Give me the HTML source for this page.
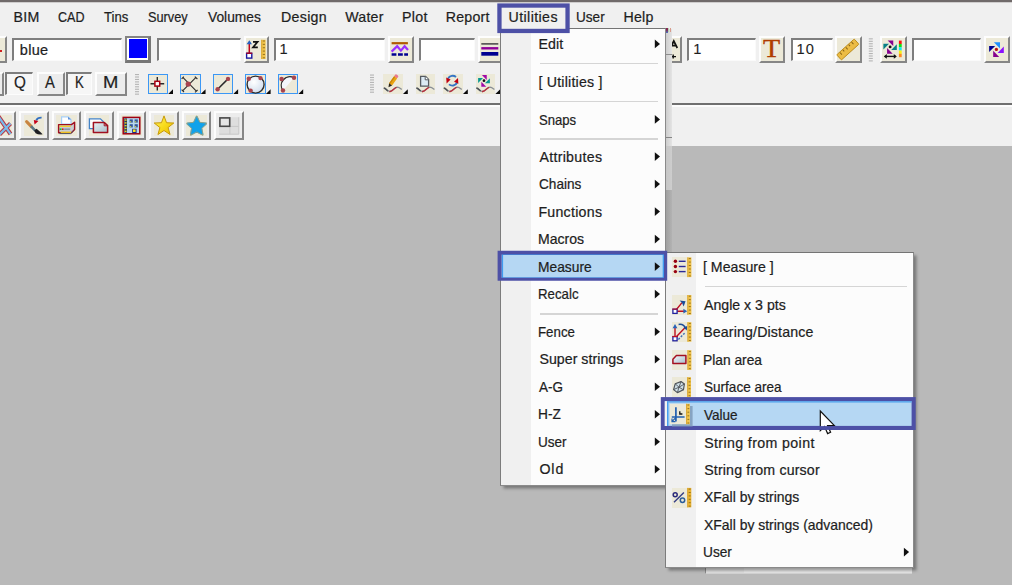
<!DOCTYPE html>
<html><head><meta charset="utf-8"><title>Utilities - Measure - Value</title>
<style>
html,body{margin:0;padding:0}
body{width:1012px;height:585px;overflow:hidden;background:#b9b9b9;position:relative;font-family:"Liberation Sans",sans-serif}
.a{position:absolute;box-sizing:border-box}
.t{position:absolute;transform-origin:0 0;white-space:pre;line-height:normal;font-family:"Liberation Sans",sans-serif;-webkit-text-stroke:0.22px currentColor}
.rb{border-top:2px solid #fdfdfd;border-left:2px solid #fdfdfd;border-right:2.2px solid #868686;border-bottom:2.2px solid #868686}
.sk{background:#fff;border-top:2px solid #7e7e7e;border-left:2px solid #7e7e7e;border-right:1.5px solid #fafafa;border-bottom:1.5px solid #fafafa}
.sb{background:#f6f6f6;border-top:2px solid #7e7e7e;border-left:2px solid #7e7e7e;border-right:1.5px solid #fcfcfc;border-bottom:1.5px solid #fcfcfc}
.menu{background:#fcfcfc;border:1px solid #8a8a8a;border-top-color:#747474;border-left-color:#7c7c7c;box-shadow:2.5px 2.5px 3px rgba(0,0,0,.36)}
.gut{background:#f0f0f0}
svg{overflow:hidden}
</style></head>
<body>
<div class="a" style="left:0px;top:0px;width:1012px;height:146px;background:#f0f0f0"></div>
<div class="a" style="left:0px;top:0px;width:1012px;height:2px;background:#706a6a"></div>
<div class="a" style="left:0px;top:2px;width:1012px;height:1px;background:#cfcdcd"></div>
<div class="a" style="left:0px;top:102.6px;width:1012px;height:2.4px;background:#6f6f6f"></div>
<div class="a" style="left:0px;top:105px;width:1012px;height:2px;background:#fcfcfc"></div>
<div class="a rb" style="left:-20px;top:36px;width:26.5px;height:26.5px;background:#ece9d8"></div>
<div class="a" style="left:0px;top:50px;width:2px;height:2px;background:#d02020"></div>
<div class="a sk" style="left:12px;top:37.5px;width:110px;height:23px;"></div>
<div class="a" style="left:125px;top:36px;width:26.3px;height:27px;background:#fff;border:2px solid #848484;border-right:3px solid #767676;border-bottom:3px solid #767676"></div>
<div class="a" style="left:128.8px;top:39.3px;width:18px;height:18.8px;background:#0000ff"></div>
<div class="a sk" style="left:156.5px;top:37.5px;width:84px;height:23px;"></div>
<div class="a rb" style="left:243.5px;top:36px;width:25.5px;height:26.5px;background:#ece9d8"></div>
<div class="a sk" style="left:274px;top:37.5px;width:111px;height:23px;"></div>
<div class="a rb" style="left:388.3px;top:36px;width:25.5px;height:26.5px;background:#ece9d8"></div>
<div class="a sk" style="left:419.3px;top:37.5px;width:56px;height:23px;"></div>
<div class="a rb" style="left:478.3px;top:36px;width:25.5px;height:26.5px;background:#ece9d8"></div>
<div class="a rb" style="left:656px;top:36px;width:25.5px;height:26.5px;background:#ece9d8"></div>
<div class="a sk" style="left:686.8px;top:37.5px;width:69.5px;height:23px;"></div>
<div class="a rb" style="left:759px;top:36px;width:26px;height:26.5px;background:#ece9d8"></div>
<div class="a sk" style="left:790.8px;top:37.5px;width:42px;height:23px;"></div>
<div class="a rb" style="left:834.6px;top:36px;width:27px;height:26.5px;background:#ece9d8"></div>
<div class="a rb" style="left:880px;top:36px;width:26.5px;height:26.5px;background:#ece9d8"></div>
<div class="a sk" style="left:912px;top:37.5px;width:69px;height:23px;"></div>
<div class="a rb" style="left:984.2px;top:36px;width:26px;height:26.5px;background:#ece9d8"></div>
<div class="a rb" style="left:-20px;top:72px;width:23.5px;height:24px;background:#ececec"></div>
<div class="a sb" style="left:5px;top:72px;width:28px;height:22.5px;"></div>
<div class="a rb" style="left:37px;top:72px;width:27.5px;height:24px;background:#ececec"></div>
<div class="a sb" style="left:66px;top:72px;width:26px;height:22.5px;"></div>
<div class="a rb" style="left:95px;top:72px;width:31.7px;height:24px;background:#ececec"></div>
<div class="a" style="left:147.8px;top:74.2px;width:20.2px;height:20.2px;background:#ece9d8;border:1.3px solid #3b97f5"></div>
<div class="a" style="left:180.4px;top:74.2px;width:20.2px;height:20.2px;background:#ece9d8;border:1.3px solid #3b97f5"></div>
<div class="a" style="left:212.9px;top:74.2px;width:20.2px;height:20.2px;background:#ece9d8;border:1.3px solid #3b97f5"></div>
<div class="a" style="left:245.4px;top:74.2px;width:20.2px;height:20.2px;background:#ece9d8;border:1.3px solid #3b97f5"></div>
<div class="a" style="left:278.0px;top:74.2px;width:20.2px;height:20.2px;background:#ece9d8;border:1.3px solid #3b97f5"></div>
<div class="a" style="left:383px;top:74px;width:19.6px;height:20px;background:#ece9d8"></div>
<div class="a" style="left:415.6px;top:74px;width:19.6px;height:20px;background:#ece9d8"></div>
<div class="a" style="left:443px;top:74px;width:19.6px;height:20px;background:#ece9d8"></div>
<div class="a" style="left:475.6px;top:74px;width:19.6px;height:20px;background:#ece9d8"></div>
<div class="a rb" style="left:-13.2px;top:110.7px;width:29.6px;height:29.8px;background:#ececec"><div class="a" style="left:2.5px;top:2.6px;width:20.6px;height:20.6px;background:#ece9d8"></div></div>
<div class="a rb" style="left:19.3px;top:110.7px;width:29.6px;height:29.8px;background:#ececec"><div class="a" style="left:2.5px;top:2.6px;width:20.6px;height:20.6px;background:#ece9d8"></div></div>
<div class="a rb" style="left:51.8px;top:110.7px;width:29.6px;height:29.8px;background:#ececec"><div class="a" style="left:2.5px;top:2.6px;width:20.6px;height:20.6px;background:#ece9d8"></div></div>
<div class="a rb" style="left:84.3px;top:110.7px;width:29.6px;height:29.8px;background:#ececec"><div class="a" style="left:2.5px;top:2.6px;width:20.6px;height:20.6px;background:#ece9d8"></div></div>
<div class="a rb" style="left:116.8px;top:110.7px;width:29.6px;height:29.8px;background:#ececec"><div class="a" style="left:2.5px;top:2.6px;width:20.6px;height:20.6px;background:#ece9d8"></div></div>
<div class="a rb" style="left:149.3px;top:110.7px;width:29.6px;height:29.8px;background:#ececec"><div class="a" style="left:2.5px;top:2.6px;width:20.6px;height:20.6px;background:#ece9d8"></div></div>
<div class="a rb" style="left:181.8px;top:110.7px;width:29.6px;height:29.8px;background:#ececec"><div class="a" style="left:2.5px;top:2.6px;width:20.6px;height:20.6px;background:#ece9d8"></div></div>
<div class="a rb" style="left:214.3px;top:110.7px;width:29.6px;height:29.8px;background:#ececec"></div>
<svg class="a" style="left:0;top:0" width="1012" height="585" viewBox="0 0 1012 585"><path d="M249.3 42.5 V54" stroke="#c00018" stroke-width="1.5"/><path d="M246.6 44.3 L249.3 40.3 L252 44.3 Z" fill="#2860c0"/><rect x="246.6" y="53.3" width="5.2" height="4.8" fill="#fff" stroke="#1818a0" stroke-width="1.4"/><path d="M246.3 53.2 H252.2" stroke="#b00018" stroke-width="1.3"/><path d="M253 41.8 H257.6 L253 47.3 H257.8" stroke="#111" stroke-width="1.7" fill="none"/><rect x="261.3" y="39.8" width="4.3" height="19.2" fill="#efc24a"/><rect x="261.3" y="39.8" width="0.8" height="19.2" fill="#d9a22a"/><rect x="262.81" y="40.50" width="2.15" height="1" fill="#7a5a10" opacity=".75"/><rect x="262.81" y="43.86" width="2.15" height="1" fill="#7a5a10" opacity=".75"/><rect x="262.81" y="47.22" width="2.15" height="1" fill="#7a5a10" opacity=".75"/><rect x="262.81" y="50.58" width="2.15" height="1" fill="#7a5a10" opacity=".75"/><rect x="262.81" y="53.94" width="2.15" height="1" fill="#7a5a10" opacity=".75"/><rect x="262.81" y="57.30" width="2.15" height="1" fill="#7a5a10" opacity=".75"/><rect x="391.6" y="42.1" width="16.3" height="2.2" fill="#b05a00"/><path d="M391.6 51.6 L397.2 46.2 L400.9 50.6 L404.6 46.2 L408 50" stroke="#9a30ff" stroke-width="2.2" fill="none"/><path d="M391.6 54.5 H396.4 M398 54.5 H402.8 M404.2 54.5 H408" stroke="#000090" stroke-width="2.6"/><rect x="481.3" y="43.2" width="17" height="1.4" fill="#3a3a3a"/><rect x="481.3" y="47.1" width="17" height="2.4" fill="#900098"/><rect x="481.3" y="52" width="17" height="3.7" fill="#000090"/><path d="M670.3 48 L673.8 41 L677.3 48 M671.6 45.6 H676" stroke="#111" stroke-width="1.7" fill="none"/><path d="M670.5 56.6 H676 M673.2 54.6 V58.6" stroke="#111" stroke-width="1.4"/><text transform="translate(763.1 57.3) scale(1.1 1)" x="0" y="0" font-family="Liberation Serif" font-size="25.6" fill="#b03c00" stroke="#b03c00" stroke-width=".35">T</text><g transform="rotate(-42 847.8 49.5)"><rect x="836" y="46" width="23.6" height="7" rx="0.8" fill="#ecbc44" stroke="#b98a1c" stroke-width="0.9"/><path d="M840 46.5 V49.3 M843.9 46.5 V48.5 M847.8 46.5 V49.3 M851.7 46.5 V48.5 M855.6 46.5 V49.3" stroke="#8a6414" stroke-width="1"/></g><rect x="868.8" y="38.30" width="4" height="1.1" fill="#b4b4b4"/><rect x="868.8" y="40.75" width="4" height="1.1" fill="#b4b4b4"/><rect x="868.8" y="43.20" width="4" height="1.1" fill="#b4b4b4"/><rect x="868.8" y="45.65" width="4" height="1.1" fill="#b4b4b4"/><rect x="868.8" y="48.10" width="4" height="1.1" fill="#b4b4b4"/><rect x="868.8" y="50.55" width="4" height="1.1" fill="#b4b4b4"/><rect x="868.8" y="53.00" width="4" height="1.1" fill="#b4b4b4"/><rect x="868.8" y="55.45" width="4" height="1.1" fill="#b4b4b4"/><rect x="868.8" y="57.90" width="4" height="1.1" fill="#b4b4b4"/><rect x="868.8" y="60.35" width="4" height="1.1" fill="#b4b4b4"/><polygon points="887.71,40.38 893.22,40.38 893.22,45.98" fill="#86008e"/><polygon points="896.80,44.24 896.80,49.93 891.20,49.93" fill="#088086"/><polygon points="887.07,48.00 887.07,53.69 892.67,53.69" fill="#86008e"/><polygon points="883.40,43.87 889.00,43.87 883.40,49.38" fill="#088086"/><circle cx="890.1" cy="46.9" r="1.47" fill="#111"/><path d="M884.8 56.4 H895.8" stroke="#111" stroke-width="1.4"/><path d="M886.8 54 L883.8 56.4 L886.8 58.8 Z M893.8 54 L896.8 56.4 L893.8 58.8 Z" fill="#111"/><rect x="898.9" y="40.6" width="2.8" height="3.4" fill="#ff1010"/><rect x="898.9" y="43.9" width="2.8" height="3.4" fill="#10e010"/><rect x="898.9" y="47.2" width="2.8" height="3.4" fill="#10e8f0"/><rect x="898.9" y="50.5" width="2.8" height="3.4" fill="#f8f010"/><rect x="898.9" y="53.8" width="2.8" height="3.4" fill="#ff8820"/><path d="M993.9 42.3 H1000 V48.4 Z" fill="#1e90ff"/><path d="M1003.8 46.6 V52.9 H997.6 Z" fill="#8a10ff"/><path d="M993.2 50.7 V57 H999.2 Z" fill="#86008e"/><path d="M989.1 46.1 H995.2 L989.1 52.1 Z" fill="#000090"/><circle cx="996.4" cy="49.4" r="1.6" fill="#b81010"/><rect x="135" y="74.00" width="4" height="1.1" fill="#b4b4b4"/><rect x="135" y="76.45" width="4" height="1.1" fill="#b4b4b4"/><rect x="135" y="78.90" width="4" height="1.1" fill="#b4b4b4"/><rect x="135" y="81.35" width="4" height="1.1" fill="#b4b4b4"/><rect x="135" y="83.80" width="4" height="1.1" fill="#b4b4b4"/><rect x="135" y="86.25" width="4" height="1.1" fill="#b4b4b4"/><rect x="135" y="88.70" width="4" height="1.1" fill="#b4b4b4"/><rect x="135" y="91.15" width="4" height="1.1" fill="#b4b4b4"/><rect x="135" y="93.60" width="4" height="1.1" fill="#b4b4b4"/><path d="M150.5 83.7 H164.2 M157.3 77 V90.6" stroke="#2a2a2a" stroke-width="1.4"/><rect x="154.9" y="81.3" width="4.8" height="4.8" fill="#fff" stroke="#a80010" stroke-width="1.5"/><path d="M182.6 77.2 L196.6 91.4 M196.2 77.2 L182.6 90.8 M194.8 76.6 L197.4 79 M195 92.4 L197.6 90 M181.6 78.8 L183.8 76.6 M181.6 89.6 L184 92" stroke="#2e2e2e" stroke-width="1.1" fill="none"/><circle cx="188.2" cy="84.1" r="2.6" fill="#a8444e"/><path d="M217.6 89.3 L228 78.9" stroke="#2a2a2a" stroke-width="1.5"/><circle cx="217.6" cy="89.3" r="2.2" fill="#a8444e"/><circle cx="228" cy="78.9" r="2.2" fill="#a8444e"/><defs><radialGradient id="gs" cx="40%" cy="35%" r="70%"><stop offset="0" stop-color="#ffffff"/><stop offset="1" stop-color="#cfdcec"/></radialGradient></defs><circle cx="255.6" cy="84.6" r="8.5" fill="url(#gs)" stroke="#2e2e2e" stroke-width="1.4"/><circle cx="248.8" cy="78.7" r="2.2" fill="#a8444e"/><circle cx="260.5" cy="78.1" r="2.2" fill="#a8444e"/><circle cx="250.6" cy="90.6" r="2.2" fill="#a8444e"/><path d="M283 90.5 A8.6 8.6 0 0 1 294 77.8 Z" fill="#f4f7fb" stroke="none"/><path d="M283 90.5 A8.6 8.6 0 0 1 294 77.8" fill="none" stroke="#2e2e2e" stroke-width="1.3"/><circle cx="281.6" cy="79" r="2.2" fill="#a8444e"/><circle cx="294" cy="77.8" r="2.2" fill="#a8444e"/><circle cx="283" cy="90.5" r="2.2" fill="#a8444e"/><path d="M168.2 94.1 L173.0 94.1 L173.0 89.3 Z" fill="#0a0a0a"/><path d="M200.75 94.1 L205.55 94.1 L205.55 89.3 Z" fill="#0a0a0a"/><path d="M233.29999999999998 94.1 L238.1 94.1 L238.1 89.3 Z" fill="#0a0a0a"/><path d="M265.84999999999997 94.1 L270.65 94.1 L270.65 89.3 Z" fill="#0a0a0a"/><path d="M298.4 94.1 L303.2 94.1 L303.2 89.3 Z" fill="#0a0a0a"/><rect x="370" y="74.50" width="4" height="1.1" fill="#b4b4b4"/><rect x="370" y="76.95" width="4" height="1.1" fill="#b4b4b4"/><rect x="370" y="79.40" width="4" height="1.1" fill="#b4b4b4"/><rect x="370" y="81.85" width="4" height="1.1" fill="#b4b4b4"/><rect x="370" y="84.30" width="4" height="1.1" fill="#b4b4b4"/><rect x="370" y="86.75" width="4" height="1.1" fill="#b4b4b4"/><rect x="370" y="89.20" width="4" height="1.1" fill="#b4b4b4"/><rect x="370" y="91.65" width="4" height="1.1" fill="#b4b4b4"/><path d="M383.8 88.1 C386.4 88.6 387.4 91.7 390 91.5 C393 91.3 394.4 87.3 397.4 87.2 C399.4 87.2 400.6 88.6 401.8 89.5" fill="none" stroke="#8a9096" stroke-width="1.3"/><path d="M383.8 88.1 C386.4 88.6 387.4 91.7 390 91.5 C393 91.3 394.4 87.3 397.4 87.2 C399.4 87.2 400.6 88.6 401.8 89.5" fill="none" stroke="#bc2432" stroke-width="1.3" stroke-dasharray="0 6.6 8.4 30" opacity=".92"/><path d="M383.8 88.1 C386.4 88.6 387.4 91.7 390 91.5" fill="none" stroke="#50545a" stroke-width="1.5" stroke-dasharray="5.2 30"/><g transform="rotate(35.5 392.7 81.3)"><rect x="390.9" y="73.6" width="3.7" height="3" rx="1" fill="#ea7890"/><rect x="390.9" y="76.4" width="3.7" height="8.6" fill="#eaa410"/><rect x="390.9" y="76.4" width="1.3" height="8.6" fill="#c88408"/><path d="M390.9 85 H394.6 L392.75 88.6 Z" fill="#2a2418"/></g><path d="M416.40000000000003 88.1 C419.0 88.6 420.0 91.7 422.6 91.5 C425.6 91.3 427.0 87.3 430.0 87.2 C432.0 87.2 433.20000000000005 88.6 434.40000000000003 89.5" fill="none" stroke="#8a9096" stroke-width="1.3"/><path d="M416.40000000000003 88.1 C419.0 88.6 420.0 91.7 422.6 91.5 C425.6 91.3 427.0 87.3 430.0 87.2 C432.0 87.2 433.20000000000005 88.6 434.40000000000003 89.5" fill="none" stroke="#bc2432" stroke-width="1.3" stroke-dasharray="0 6.6 8.4 30" opacity=".92"/><path d="M416.40000000000003 88.1 C419.0 88.6 420.0 91.7 422.6 91.5" fill="none" stroke="#50545a" stroke-width="1.5" stroke-dasharray="5.2 30"/><path d="M420.6 76.4 H425.6 L428.6 79.4 V86.2 H420.6 Z" fill="#dceaf4" stroke="#555a60" stroke-width="1.3"/><path d="M425.2 76.4 V79.8 H428.6" fill="#fff" stroke="#555a60" stroke-width="1"/><path d="M443.8 88.1 C446.4 88.6 447.4 91.7 450 91.5 C453 91.3 454.4 87.3 457.4 87.2 C459.4 87.2 460.6 88.6 461.8 89.5" fill="none" stroke="#8a9096" stroke-width="1.3"/><path d="M443.8 88.1 C446.4 88.6 447.4 91.7 450 91.5 C453 91.3 454.4 87.3 457.4 87.2 C459.4 87.2 460.6 88.6 461.8 89.5" fill="none" stroke="#bc2432" stroke-width="1.3" stroke-dasharray="0 6.6 8.4 30" opacity=".92"/><path d="M443.8 88.1 C446.4 88.6 447.4 91.7 450 91.5" fill="none" stroke="#50545a" stroke-width="1.5" stroke-dasharray="5.2 30"/><path d="M448 78.6 A5.2 5.2 0 0 1 456 77" fill="none" stroke="#3474c4" stroke-width="1.9"/><path d="M457 82.8 A5.2 5.2 0 0 1 449 84.4" fill="none" stroke="#3474c4" stroke-width="1.9"/><path d="M446.2 77.6 L450.6 79.4 L446.6 83.4 Z" fill="#c00010"/><path d="M458.4 83.8 L454 81.8 L458 78 Z" fill="#c00010"/><path d="M476.40000000000003 88.1 C479.0 88.6 480.0 91.7 482.6 91.5 C485.6 91.3 487.0 87.3 490.0 87.2 C492.0 87.2 493.20000000000005 88.6 494.40000000000003 89.5" fill="none" stroke="#8a9096" stroke-width="1.3"/><path d="M476.40000000000003 88.1 C479.0 88.6 480.0 91.7 482.6 91.5 C485.6 91.3 487.0 87.3 490.0 87.2 C492.0 87.2 493.20000000000005 88.6 494.40000000000003 89.5" fill="none" stroke="#bc2432" stroke-width="1.3" stroke-dasharray="0 6.6 8.4 30" opacity=".92"/><path d="M476.40000000000003 88.1 C479.0 88.6 480.0 91.7 482.6 91.5" fill="none" stroke="#50545a" stroke-width="1.5" stroke-dasharray="5.2 30"/><polygon points="481.90,74.96 486.75,74.96 486.75,79.89" fill="#a008a8"/><polygon points="489.90,78.36 489.90,83.37 484.97,83.37" fill="#089890"/><polygon points="481.33,81.67 481.33,86.68 486.26,86.68" fill="#a008a8"/><polygon points="478.10,78.03 483.03,78.03 478.10,82.88" fill="#089890"/><circle cx="484" cy="80.7" r="1.36" fill="#111"/><path d="M403 94.1 L407.8 94.1 L407.8 89.3 Z" fill="#0a0a0a"/><path d="M463 94.1 L467.8 94.1 L467.8 89.3 Z" fill="#0a0a0a"/><path d="M495.4 94.1 L500.2 94.1 L500.2 89.3 Z" fill="#0a0a0a"/><path d="M-1.5 116.5 L10.5 134 M10.5 123.5 L-0.5 134.5" stroke="#b43848" stroke-width="4.2" fill="none"/><path d="M-1.5 116.5 L10.5 134 M10.5 123.5 L-0.5 134.5" stroke="#78bcec" stroke-width="2.2" fill="none"/><path d="M26.6 121.6 L31.4 126.6" stroke="#c88440" stroke-width="3" stroke-linecap="round"/><path d="M31 126.2 L35.4 130.8" stroke="#5a7684" stroke-width="2.6"/><path d="M34.2 130.6 L36.6 128.8 Q40 131.6 42.6 134.2 Q38.6 135 35.6 133.2 Z" fill="#1e1e22"/><path d="M41.6 117.6 Q37.6 117.4 36.2 120.4" fill="none" stroke="#3470c0" stroke-width="1.8"/><path d="M33.8 120 L38.4 121 L34.6 124.4 Z" fill="#c80018"/><path d="M61.6 124 V116.8 H68 L71 119.6 V124 Z" fill="#fff" stroke="#a8d0f8" stroke-width="1.2"/><path d="M68 116.8 L71 119.6 H68 Z" fill="#5c90d8"/><path d="M58.6 124.6 H71.4 L74.6 122.2 V129.6 L71.4 132.8 H58.6 Z" fill="#c8ccd0" stroke="#a01020" stroke-width="1.4" stroke-linejoin="round"/><rect x="59.4" y="125.6" width="11.4" height="1.3" fill="#f4d020"/><rect x="60.6" y="131.6" width="10.4" height="1.4" fill="#f0c020"/><path d="M59.4 133.6 H70.6 L73.6 130.8" stroke="#505860" stroke-width="1" fill="none"/><rect x="59.6" y="128.4" width="2" height="1.6" fill="#18c030"/><rect x="62" y="128.4" width="1.6" height="1.6" fill="#e01020"/><rect x="64.2" y="128.4" width="6" height="1.6" fill="#8898a8"/><defs><linearGradient id="gp" x1="0" y1="0" x2="1" y2="1"><stop offset="0" stop-color="#e8f0f4"/><stop offset="1" stop-color="#a8c0cc"/></linearGradient></defs><path d="M89.4 118.8 H100.4 L103.2 121.6 V128.6 H89.4 Z" fill="#fdfdfd" stroke="#4484c8" stroke-width="1.3"/><path d="M93.4 122.6 H104.4 L107.6 125.6 V132.4 H93.4 Z" fill="url(#gp)" stroke="#a01020" stroke-width="1.5" stroke-linejoin="round"/><path d="M104.2 122.8 V125.8 H107.4" fill="none" stroke="#a01020" stroke-width="1"/><rect x="123.2" y="117.4" width="16.6" height="16.4" fill="#b8d8ee" stroke="#a00010" stroke-width="1.5"/><rect x="124.2" y="118.4" width="2.8" height="14.4" fill="#283858"/><rect x="124.6" y="119.4" width="2" height="1.4" fill="#e8d020"/><rect x="124.6" y="122.2" width="2" height="1.4" fill="#e8d020"/><rect x="124.6" y="125.0" width="2" height="1.4" fill="#e8d020"/><rect x="124.6" y="127.8" width="2" height="1.4" fill="#e8d020"/><rect x="124.6" y="130.6" width="2" height="1.4" fill="#e8d020"/><rect x="129.6" y="119.4" width="3.2" height="3.2" fill="#34569a"/><rect x="129.79999999999998" y="121.2" width="1.4" height="1.2" fill="#c8c848"/><rect x="134.6" y="119.4" width="3.2" height="3.2" fill="#34569a"/><rect x="134.79999999999998" y="121.2" width="1.4" height="1.2" fill="#c8c848"/><rect x="129.6" y="124.2" width="3.2" height="3.2" fill="#34569a"/><rect x="129.79999999999998" y="126.0" width="1.4" height="1.2" fill="#c8c848"/><rect x="134.6" y="124.2" width="3.2" height="3.2" fill="#34569a"/><rect x="134.79999999999998" y="126.0" width="1.4" height="1.2" fill="#c8c848"/><rect x="132.2" y="128.8" width="4.4" height="4.4" fill="#202880"/><rect x="133" y="129.4" width="2.6" height="2.6" fill="#f8e820"/><defs><linearGradient id="gy" x1="0" y1="0" x2="1" y2="1"><stop offset="0" stop-color="#fff26a"/><stop offset=".5" stop-color="#f8dc1c"/><stop offset="1" stop-color="#e8b800"/></linearGradient></defs><polygon points="164.00,115.90 166.53,122.72 173.80,123.02 168.09,127.53 170.05,134.53 164.00,130.50 157.95,134.53 159.91,127.53 154.20,123.02 161.47,122.72" fill="url(#gy)" stroke="#c89a08" stroke-width="1" stroke-linejoin="round"/><polygon points="196.70,117.00 199.40,122.88 205.83,123.63 201.07,128.02 202.34,134.37 196.70,131.20 191.06,134.37 192.33,128.02 187.57,123.63 194.00,122.88" fill="#12a2ea" stroke="#12a2ea" stroke-width="2.2" stroke-linejoin="round"/><polygon points="196.70,115.80 199.87,122.23 206.97,123.26 201.84,128.27 203.05,135.34 196.70,132.00 190.35,135.34 191.56,128.27 186.43,123.26 193.53,122.23" fill="none" stroke="#d8a050" stroke-width=".8" stroke-linejoin="round" opacity=".8"/><rect x="219.2" y="117.2" width="19.6" height="17" fill="#dedede"/><path d="M229.9 117.2 V134.2 M219.2 126.4 H238.8 M238.8 117.2 V134.2 H219.2" stroke="#c8c8c8" stroke-width="1" fill="none"/><rect x="219.9" y="117.9" width="9.8" height="8.4" fill="#e4e4e4" stroke="#484848" stroke-width="1.6"/></svg>
<div class="a" style="left:705px;top:560px;width:206.5px;height:14px;background:#e6e6e6;border-left:1px solid #8c8c8c;border-bottom:1px solid #d2d2d2"></div>
<div class="a" style="left:706px;top:560px;width:38px;height:13px;background:#dedede"></div>
<div class="a menu" style="left:500.2px;top:28.3px;width:165.40000000000003px;height:457.7px"><div class="a gut" style="left:0;top:0;width:29.5px;height:455.7px"></div></div>
<div class="a" style="left:665.6px;top:28.5px;width:6px;height:117.5px;background:linear-gradient(90deg,#cdcdcd,#e4e4e4)"></div>
<div class="a" style="left:665.6px;top:146px;width:6px;height:44px;background:linear-gradient(90deg,#c6c6c6,#cdcdcd)"></div>
<div class="a" style="left:665.6px;top:190px;width:6px;height:62px;background:linear-gradient(90deg,#a0a0a0,#b2b2b2)"></div>
<div class="a" style="left:665.6px;top:53.5px;width:6.5px;height:1.6px;background:#8c8c8c"></div>
<div class="a" style="left:665.6px;top:136.6px;width:6.5px;height:1.8px;background:#858585"></div>
<div class="a" style="left:666px;top:28px;width:2px;height:5px;background:linear-gradient(180deg,#7c1444 40%,#3a6cc4);opacity:.9"></div>
<div class="a" style="left:668px;top:28px;width:1px;height:4px;background:#b4d4b0"></div>
<div class="a" style="left:670px;top:28px;width:1px;height:4px;background:#d89c8c"></div>
<div class="a" style="left:540px;top:63.0px;width:118.29999999999995px;height:1.3px;background:#d5d5d5"></div>
<div class="a" style="left:540px;top:100.7px;width:118.29999999999995px;height:1.3px;background:#d5d5d5"></div>
<div class="a" style="left:540px;top:138.3px;width:118.29999999999995px;height:1.3px;background:#d5d5d5"></div>
<div class="a" style="left:540px;top:313.29999999999995px;width:118.29999999999995px;height:1.3px;background:#d5d5d5"></div>
<div class="a menu" style="left:665px;top:252px;width:249px;height:316px"><div class="a gut" style="left:0;top:0;width:30px;height:314px"></div></div>
<div class="a" style="left:705px;top:285.7px;width:202px;height:1.3px;background:#d5d5d5"></div>
<div class="a" style="left:671.6px;top:257.4px;width:19.8px;height:19.7px;background:#ece9d8"></div>
<div class="a" style="left:671.6px;top:295px;width:19.8px;height:19.7px;background:#ece9d8"></div>
<div class="a" style="left:671.6px;top:322.2px;width:19.8px;height:19.7px;background:#ece9d8"></div>
<div class="a" style="left:671.6px;top:350.2px;width:19.8px;height:19.7px;background:#ece9d8"></div>
<div class="a" style="left:671.6px;top:377.2px;width:19.8px;height:19.7px;background:#ece9d8"></div>
<div class="a" style="left:671.6px;top:487.9px;width:19.8px;height:19.7px;background:#ece9d8"></div>
<svg class="a" style="left:0;top:0" width="1012" height="585" viewBox="0 0 1012 585"><rect x="499.45" y="5.55" width="68.10" height="25.40" fill="#f0f0f0" stroke="#4d50a6" stroke-width="4.3"/><rect x="502.3" y="254.2" width="161.2" height="24" fill="#b5d7f3" stroke="#3f9cf0" stroke-width="1.6"/><path d="M497.6 250.7 H667.2 V280.7 H497.6 Z M501.6 254.5 V277.7 H664 V254.5 Z" fill="#4d50a6" fill-rule="evenodd"/><rect x="662.85" y="399.15" width="250.80" height="28.80" fill="#b5d7f3" stroke="#4d50a6" stroke-width="4.1"/><rect x="664.7" y="401.2" width="2.4" height="24.8" fill="#f2f2f2"/><rect x="667.1" y="401.2" width="1.3" height="24.8" fill="#3a98f0"/><path d="M668.4 401.9 H911.7" fill="none" stroke="#4aa0ee" stroke-width="1.4"/><circle cx="675.4" cy="261.3" r="1.7" fill="#980010"/><rect x="678.8" y="260.6" width="6.8" height="1.4" fill="#2a2a98"/><circle cx="675.4" cy="266.5" r="1.7" fill="#980010"/><rect x="678.8" y="265.8" width="6.8" height="1.4" fill="#2a2a98"/><circle cx="675.4" cy="271.6" r="1.7" fill="#980010"/><rect x="678.8" y="270.90000000000003" width="6.8" height="1.4" fill="#2a2a98"/><rect x="687.4" y="257.4" width="4" height="19.7" fill="#efc24a"/><rect x="687.4" y="257.4" width="0.8" height="19.7" fill="#d9a22a"/><rect x="688.80" y="258.10" width="2.00" height="1" fill="#7a5a10" opacity=".75"/><rect x="688.80" y="261.56" width="2.00" height="1" fill="#7a5a10" opacity=".75"/><rect x="688.80" y="265.02" width="2.00" height="1" fill="#7a5a10" opacity=".75"/><rect x="688.80" y="268.48" width="2.00" height="1" fill="#7a5a10" opacity=".75"/><rect x="688.80" y="271.94" width="2.00" height="1" fill="#7a5a10" opacity=".75"/><rect x="688.80" y="275.40" width="2.00" height="1" fill="#7a5a10" opacity=".75"/><path d="M675 311.2 H685 M675 311.2 L682 302.6" stroke="#c01020" stroke-width="1.4" fill="none"/><path d="M683.4 308.8 L687.2 311.2 L683.4 313.6 Z" fill="#2a62b8"/><path d="M679.6 300.4 L685.6 301.2 L683.6 306.6 Q683.2 303 679.6 300.4 Z" fill="#1c4c98"/><rect x="672.9" y="309.2" width="4.2" height="4.2" fill="#fff" stroke="#2020a0" stroke-width="1.3"/><path d="M672.3 309.1 H677.8" stroke="#c01020" stroke-width="1.1"/><rect x="687.4" y="295" width="4" height="19.7" fill="#efc24a"/><rect x="687.4" y="295" width="0.8" height="19.7" fill="#d9a22a"/><rect x="688.80" y="295.70" width="2.00" height="1" fill="#7a5a10" opacity=".75"/><rect x="688.80" y="299.16" width="2.00" height="1" fill="#7a5a10" opacity=".75"/><rect x="688.80" y="302.62" width="2.00" height="1" fill="#7a5a10" opacity=".75"/><rect x="688.80" y="306.08" width="2.00" height="1" fill="#7a5a10" opacity=".75"/><rect x="688.80" y="309.54" width="2.00" height="1" fill="#7a5a10" opacity=".75"/><rect x="688.80" y="313.00" width="2.00" height="1" fill="#7a5a10" opacity=".75"/><path d="M675 337 V326 M675.6 337.6 L685.2 327.4" stroke="#c01020" stroke-width="1.4" fill="none"/><path d="M672.6 328.2 L675 324 L677.4 328.2 Z" fill="#2a62b8"/><path d="M678.6 324.4 Q683.8 323.6 685.8 328.6" fill="none" stroke="#1c4c98" stroke-width="1.5"/><path d="M683.6 327.6 L686.8 330.6 L687.2 326 Z" fill="#1c4c98"/><path d="M678.4 339.4 L685.6 332.2" stroke="#3a6cb8" stroke-width="1.4" stroke-dasharray="2 1.4"/><rect x="672.9" y="336.6" width="4.2" height="4.2" fill="#fff" stroke="#2020a0" stroke-width="1.3"/><path d="M672.3 336.5 H677.8" stroke="#c01020" stroke-width="1.1"/><rect x="687.5" y="322.2" width="3.9" height="19.5" fill="#efc24a"/><rect x="687.5" y="322.2" width="0.8" height="19.5" fill="#d9a22a"/><rect x="688.87" y="322.90" width="1.95" height="1" fill="#7a5a10" opacity=".75"/><rect x="688.87" y="326.32" width="1.95" height="1" fill="#7a5a10" opacity=".75"/><rect x="688.87" y="329.74" width="1.95" height="1" fill="#7a5a10" opacity=".75"/><rect x="688.87" y="333.16" width="1.95" height="1" fill="#7a5a10" opacity=".75"/><rect x="688.87" y="336.58" width="1.95" height="1" fill="#7a5a10" opacity=".75"/><rect x="688.87" y="340.00" width="1.95" height="1" fill="#7a5a10" opacity=".75"/><defs><linearGradient id="gq" x1="0" y1="0" x2="1" y2="1"><stop offset="0" stop-color="#f4f8fa"/><stop offset="1" stop-color="#a4bccc"/></linearGradient></defs><path d="M672.9 363.6 V359.2 L676.4 355.6 H685.9 V363.6 Z" fill="url(#gq)" stroke="#a41020" stroke-width="1.5" stroke-linejoin="round"/><rect x="687.5" y="350.2" width="3.9" height="19.7" fill="#efc24a"/><rect x="687.5" y="350.2" width="0.8" height="19.7" fill="#d9a22a"/><rect x="688.87" y="350.90" width="1.95" height="1" fill="#7a5a10" opacity=".75"/><rect x="688.87" y="354.36" width="1.95" height="1" fill="#7a5a10" opacity=".75"/><rect x="688.87" y="357.82" width="1.95" height="1" fill="#7a5a10" opacity=".75"/><rect x="688.87" y="361.28" width="1.95" height="1" fill="#7a5a10" opacity=".75"/><rect x="688.87" y="364.74" width="1.95" height="1" fill="#7a5a10" opacity=".75"/><rect x="688.87" y="368.20" width="1.95" height="1" fill="#7a5a10" opacity=".75"/><path d="M673.6 389.6 L675.2 383.8 L681 381.6 L684.4 384 L683.4 389.8 L677.4 392.6 Z" fill="#cfe0e8" stroke="#50545a" stroke-width="1.2" stroke-linejoin="round"/><path d="M679 387.2 L673.6 389.6 M679 387.2 L675.2 383.8 M679 387.2 L681 381.6 M679 387.2 L684.4 384 M679 387.2 L683.4 389.8 M679 387.2 L677.4 392.6" stroke="#50545a" stroke-width=".9"/><rect x="687.3" y="377.2" width="3.7" height="19.7" fill="#efc24a"/><rect x="687.3" y="377.2" width="0.8" height="19.7" fill="#d9a22a"/><rect x="688.59" y="377.90" width="1.85" height="1" fill="#7a5a10" opacity=".75"/><rect x="688.59" y="381.36" width="1.85" height="1" fill="#7a5a10" opacity=".75"/><rect x="688.59" y="384.82" width="1.85" height="1" fill="#7a5a10" opacity=".75"/><rect x="688.59" y="388.28" width="1.85" height="1" fill="#7a5a10" opacity=".75"/><rect x="688.59" y="391.74" width="1.85" height="1" fill="#7a5a10" opacity=".75"/><rect x="688.59" y="395.20" width="1.85" height="1" fill="#7a5a10" opacity=".75"/><path d="M654.8 39.6 L660.0 43.9 L654.8 48.199999999999996 Z" fill="#111"/><path d="M654.8 115.1 L660.0 119.39999999999999 L654.8 123.69999999999999 Z" fill="#111"/><path d="M654.8 152.29999999999998 L660.0 156.6 L654.8 160.9 Z" fill="#111"/><path d="M654.8 179.79999999999998 L660.0 184.1 L654.8 188.4 Z" fill="#111"/><path d="M654.8 207.29999999999998 L660.0 211.6 L654.8 215.9 Z" fill="#111"/><path d="M654.8 234.79999999999998 L660.0 239.1 L654.8 243.4 Z" fill="#111"/><path d="M654.8 262.3 L660.0 266.6 L654.8 270.90000000000003 Z" fill="#111"/><path d="M654.8 289.8 L660.0 294.1 L654.8 298.40000000000003 Z" fill="#111"/><path d="M654.8 327.5 L660.0 331.8 L654.8 336.1 Z" fill="#111"/><path d="M654.8 355.0 L660.0 359.3 L654.8 363.6 Z" fill="#111"/><path d="M654.8 382.5 L660.0 386.8 L654.8 391.1 Z" fill="#111"/><path d="M654.8 410.0 L660.0 414.3 L654.8 418.6 Z" fill="#111"/><path d="M654.8 437.5 L660.0 441.8 L654.8 446.1 Z" fill="#111"/><path d="M654.8 465.0 L660.0 469.3 L654.8 473.6 Z" fill="#111"/><path d="M903.9 547.8000000000001 L909.1 552.1 L903.9 556.4 Z" fill="#111"/><rect x="672" y="406" width="20.6" height="20.4" fill="#86a4c2"/><rect x="669.8" y="403.8" width="20" height="20.4" fill="#ece9d8"/><path d="M675.9 407.2 V421.6 M671.8 417 H684.6" stroke="#2260b0" stroke-width="1.7" fill="none"/><path d="M676 417.4 L672.2 421.4 M672 418.6 V421.7 H675.4" stroke="#2260b0" stroke-width="1.2" fill="none"/><path d="M679.8 411.2 V414 H682.4" stroke="#111" stroke-width="1.3" fill="none"/><rect x="686.2" y="403.8" width="3.6" height="20.4" fill="#efc24a"/><rect x="686.2" y="403.8" width="0.8" height="20.4" fill="#d9a22a"/><rect x="687.46" y="404.50" width="1.80" height="1" fill="#7a5a10" opacity=".75"/><rect x="687.46" y="408.10" width="1.80" height="1" fill="#7a5a10" opacity=".75"/><rect x="687.46" y="411.70" width="1.80" height="1" fill="#7a5a10" opacity=".75"/><rect x="687.46" y="415.30" width="1.80" height="1" fill="#7a5a10" opacity=".75"/><rect x="687.46" y="418.90" width="1.80" height="1" fill="#7a5a10" opacity=".75"/><rect x="687.46" y="422.50" width="1.80" height="1" fill="#7a5a10" opacity=".75"/><circle cx="675.2" cy="494.8" r="2" fill="none" stroke="#2a2a7c" stroke-width="1.5"/><circle cx="682.5" cy="500.3" r="2.2" fill="none" stroke="#2a5c9a" stroke-width="1.5"/><path d="M674 502.2 L683.9 492.6" stroke="#343c84" stroke-width="1.4"/><rect x="687.3" y="487.9" width="4" height="19.4" fill="#e9b434"/><rect x="687.3" y="487.9" width="0.8" height="19.4" fill="#d9a22a"/><rect x="688.70" y="488.60" width="2.00" height="1" fill="#7a5a10" opacity=".75"/><rect x="688.70" y="492.00" width="2.00" height="1" fill="#7a5a10" opacity=".75"/><rect x="688.70" y="495.40" width="2.00" height="1" fill="#7a5a10" opacity=".75"/><rect x="688.70" y="498.80" width="2.00" height="1" fill="#7a5a10" opacity=".75"/><rect x="688.70" y="502.20" width="2.00" height="1" fill="#7a5a10" opacity=".75"/><rect x="688.70" y="505.60" width="2.00" height="1" fill="#7a5a10" opacity=".75"/><path d="M820.3 411 V430.6 L824.6 426.6 L827.6 433.6 L830.6 432.2 L827.6 425.6 H834.4 Z" fill="#fff" stroke="#111" stroke-width="1.2" stroke-linejoin="miter"/><rect x="816" y="426.1" width="24" height="3.8" fill="#4d50a6"/></svg>
<span class="t" style="left:13.40px;top:9.05px;font-size:14.2px;letter-spacing:0.35px;color:#1e1e1e;">BIM</span>
<span class="t" style="left:58.30px;top:9.05px;font-size:14.2px;letter-spacing:0.00px;transform:scaleX(0.885);color:#1e1e1e;">CAD</span>
<span class="t" style="left:104.30px;top:9.05px;font-size:14.2px;letter-spacing:0.00px;transform:scaleX(0.924);color:#1e1e1e;">Tins</span>
<span class="t" style="left:148.20px;top:9.05px;font-size:14.2px;letter-spacing:0.00px;transform:scaleX(0.899);color:#1e1e1e;">Survey</span>
<span class="t" style="left:207.80px;top:9.05px;font-size:14.2px;letter-spacing:0.00px;transform:scaleX(0.972);color:#1e1e1e;">Volumes</span>
<span class="t" style="left:281.00px;top:9.05px;font-size:14.2px;letter-spacing:0.31px;color:#1e1e1e;">Design</span>
<span class="t" style="left:345.20px;top:9.05px;font-size:14.2px;letter-spacing:0.23px;color:#1e1e1e;">Water</span>
<span class="t" style="left:402.00px;top:9.05px;font-size:14.2px;letter-spacing:0.30px;color:#1e1e1e;">Plot</span>
<span class="t" style="left:445.70px;top:9.05px;font-size:14.2px;letter-spacing:0.25px;color:#1e1e1e;">Report</span>
<span class="t" style="left:508.50px;top:9.05px;font-size:14.2px;letter-spacing:0.41px;color:#1e1e1e;">Utilities</span>
<span class="t" style="left:576.34px;top:9.05px;font-size:14.2px;letter-spacing:0.00px;transform:scaleX(0.958);color:#1e1e1e;">User</span>
<span class="t" style="left:623.60px;top:9.05px;font-size:14.2px;letter-spacing:0.17px;color:#1e1e1e;">Help</span>
<span class="t" style="left:19.80px;top:41.58px;font-size:14.5px;letter-spacing:0.28px;color:#1e1e1e;">blue</span>
<span class="t" style="left:279.60px;top:41.19px;font-size:14.6px;letter-spacing:0.00px;color:#1e1e1e;-webkit-text-stroke:0.1px currentColor">1</span>
<span class="t" style="left:693.20px;top:41.19px;font-size:14.6px;letter-spacing:0.00px;color:#1e1e1e;-webkit-text-stroke:0.1px currentColor">1</span>
<span class="t" style="left:796.60px;top:41.19px;font-size:14.6px;letter-spacing:0.98px;color:#1e1e1e;-webkit-text-stroke:0.1px currentColor">10</span>
<span class="t" style="left:14.00px;top:74.00px;font-size:15.8px;letter-spacing:0.00px;transform:scaleX(0.967);color:#1e1e1e;-webkit-text-stroke:0.2px currentColor">Q</span>
<span class="t" style="left:45.10px;top:74.00px;font-size:15.8px;letter-spacing:0.00px;transform:scaleX(0.936);color:#1e1e1e;-webkit-text-stroke:0.2px currentColor">A</span>
<span class="t" style="left:75.06px;top:74.00px;font-size:15.8px;letter-spacing:0.00px;transform:scaleX(0.840);color:#1e1e1e;-webkit-text-stroke:0.2px currentColor">K</span>
<span class="t" style="left:103.44px;top:74.00px;font-size:15.8px;letter-spacing:0.00px;transform:scaleX(1.164);color:#1e1e1e;-webkit-text-stroke:0.2px currentColor">M</span>
<span class="t" style="left:538.40px;top:36.05px;font-size:14.2px;letter-spacing:0.13px;color:#1e1e1e;">Edit</span>
<span class="t" style="left:538.40px;top:73.95px;font-size:14.2px;letter-spacing:0.21px;color:#1e1e1e;">[ Utilities ]</span>
<span class="t" style="left:539.40px;top:111.55px;font-size:14.2px;letter-spacing:0.00px;transform:scaleX(0.924);color:#1e1e1e;">Snaps</span>
<span class="t" style="left:539.40px;top:148.75px;font-size:14.2px;letter-spacing:0.30px;color:#1e1e1e;">Attributes</span>
<span class="t" style="left:539.40px;top:176.25px;font-size:14.2px;letter-spacing:0.00px;transform:scaleX(0.960);color:#1e1e1e;">Chains</span>
<span class="t" style="left:538.40px;top:203.75px;font-size:14.2px;letter-spacing:0.26px;color:#1e1e1e;">Functions</span>
<span class="t" style="left:538.41px;top:231.25px;font-size:14.2px;letter-spacing:0.00px;transform:scaleX(0.991);color:#1e1e1e;">Macros</span>
<span class="t" style="left:538.43px;top:258.75px;font-size:14.2px;letter-spacing:0.00px;transform:scaleX(0.972);color:#1e1e1e;">Measure</span>
<span class="t" style="left:538.47px;top:286.25px;font-size:14.2px;letter-spacing:0.00px;transform:scaleX(0.934);color:#1e1e1e;">Recalc</span>
<span class="t" style="left:538.46px;top:323.95px;font-size:14.2px;letter-spacing:0.00px;transform:scaleX(0.937);color:#1e1e1e;">Fence</span>
<span class="t" style="left:539.40px;top:351.45px;font-size:14.2px;letter-spacing:0.03px;color:#1e1e1e;">Super strings</span>
<span class="t" style="left:539.40px;top:378.95px;font-size:14.2px;letter-spacing:0.00px;transform:scaleX(0.951);color:#1e1e1e;">A-G</span>
<span class="t" style="left:538.43px;top:406.45px;font-size:14.2px;letter-spacing:0.00px;transform:scaleX(0.966);color:#1e1e1e;">H-Z</span>
<span class="t" style="left:538.45px;top:433.95px;font-size:14.2px;letter-spacing:0.00px;transform:scaleX(0.955);color:#1e1e1e;">User</span>
<span class="t" style="left:539.40px;top:461.45px;font-size:14.2px;letter-spacing:0.91px;color:#1e1e1e;">Old</span>
<span class="t" style="left:703.20px;top:259.25px;font-size:14.2px;letter-spacing:0.00px;transform:scaleX(0.997);color:#1e1e1e;">[ Measure ]</span>
<span class="t" style="left:704.20px;top:296.95px;font-size:14.2px;letter-spacing:0.00px;transform:scaleX(0.997);color:#1e1e1e;">Angle x 3 pts</span>
<span class="t" style="left:703.20px;top:324.45px;font-size:14.2px;letter-spacing:0.14px;color:#1e1e1e;">Bearing/Distance</span>
<span class="t" style="left:703.23px;top:351.85px;font-size:14.2px;letter-spacing:0.00px;transform:scaleX(0.971);color:#1e1e1e;">Plan area</span>
<span class="t" style="left:704.20px;top:379.35px;font-size:14.2px;letter-spacing:0.00px;transform:scaleX(0.956);color:#1e1e1e;">Surface area</span>
<span class="t" style="left:704.20px;top:406.85px;font-size:14.2px;letter-spacing:0.00px;transform:scaleX(0.954);color:#1e1e1e;">Value</span>
<span class="t" style="left:704.20px;top:434.55px;font-size:14.2px;letter-spacing:0.38px;color:#1e1e1e;">String from point</span>
<span class="t" style="left:704.20px;top:461.95px;font-size:14.2px;letter-spacing:0.16px;color:#1e1e1e;">String from cursor</span>
<span class="t" style="left:704.20px;top:489.45px;font-size:14.2px;letter-spacing:0.00px;transform:scaleX(0.983);color:#1e1e1e;">XFall by strings</span>
<span class="t" style="left:704.20px;top:516.95px;font-size:14.2px;letter-spacing:0.00px;transform:scaleX(0.983);color:#1e1e1e;">XFall by strings (advanced)</span>
<span class="t" style="left:703.24px;top:544.25px;font-size:14.2px;letter-spacing:0.00px;transform:scaleX(0.965);color:#1e1e1e;">User</span>
</body></html>
